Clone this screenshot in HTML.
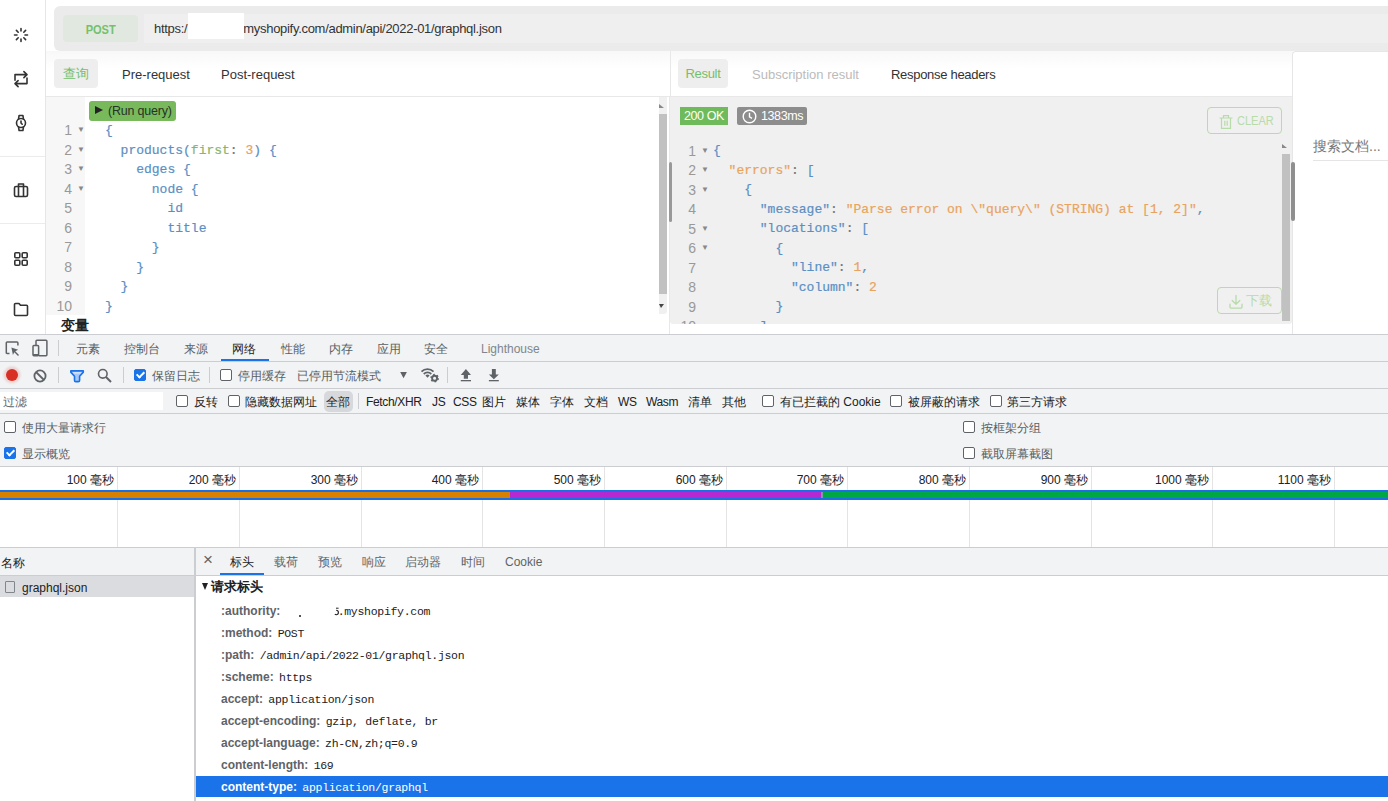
<!DOCTYPE html>
<html><head><meta charset="utf-8">
<style>
*{box-sizing:border-box;margin:0;padding:0}
html,body{width:1388px;height:801px;overflow:hidden;background:#fff;font-family:"Liberation Sans",sans-serif;position:relative}
.a{position:absolute}
.mono{font-family:"Liberation Mono",monospace}
/* sidebar */
#side{left:0;top:0;width:46px;height:334px;background:#fff;border-right:1px solid #e6e6e6}
.sep{left:0;width:45px;height:1px;background:#ececec}
/* code */
.ln{color:#999;font-size:14px;width:30px;text-align:right}
.code{font-size:13px;white-space:pre;color:#5a8ec0;-webkit-text-stroke:0.2px currentColor}
.fold{font-size:8px;color:#888}

.dt{font-size:12px;line-height:18px;color:#5a5e63;white-space:nowrap}
.cb{width:12px;height:12px;border:1.5px solid #5f6368;border-radius:2px;background:#fff}
.cb.on{background:#1a73e8;border-color:#1a73e8}
.cb.on::after{content:"";position:absolute;left:2.5px;top:0px;width:3px;height:6px;border:solid #fff;border-width:0 2px 2px 0;transform:rotate(45deg)}
.hn{font-size:12px;font-weight:bold;color:#5f6368;line-height:18px;white-space:nowrap}
.hv{font-family:"Liberation Mono",monospace;font-size:11.5px;letter-spacing:-0.3px;color:#202124;font-weight:normal;margin-left:2px}
</style></head><body>

<!-- Sidebar -->
<div id="side" class="a"></div>
<div class="a sep" style="top:156px"></div>
<div class="a sep" style="top:223px"></div>
<svg class="a" style="left:13px;top:27px" width="16" height="16" viewBox="0 0 16 16" fill="none" stroke="#333" stroke-width="1.6" stroke-linecap="round">
 <path d="M8 1.5v2.5M8 12v2.5M1.5 8h2.5M12 8h2.5M3.4 3.4l1.8 1.8M10.8 10.8l1.8 1.8M3.4 12.6l1.8-1.8M10.8 5.2l1.8-1.8"/>
</svg>
<svg class="a" style="left:13px;top:70px" width="16" height="18" viewBox="0 -1 16 18" fill="none" stroke="#333" stroke-width="1.6" stroke-linecap="round" stroke-linejoin="round">
 <path d="M2 9.2V3.6h12M10.9 0.6L14 3.6l-3.1 3M14 7V12.6H2M5.1 9.6L2 12.6l3.1 3"/>
</svg>
<svg class="a" style="left:13px;top:114px" width="16" height="18" viewBox="0 0 16 18" fill="none" stroke="#333" stroke-width="1.6" stroke-linecap="round" stroke-linejoin="round">
 <circle cx="8" cy="9" r="4.5"/><path d="M5.5 5.2l.6-3.7h3.8l.6 3.7M5.5 12.8l.6 3.7h3.8l.6-3.7M8 7v2l1.2 1.2"/>
</svg>
<svg class="a" style="left:13px;top:182px" width="16" height="16" viewBox="0 0 16 16" fill="none" stroke="#333" stroke-width="1.6" stroke-linejoin="round">
 <rect x="1.5" y="4.5" width="13" height="10" rx="1.5"/><path d="M5.5 4.5V2h5v2.5M5.5 4.5v10M10.5 4.5v10"/>
</svg>
<svg class="a" style="left:13px;top:251px" width="16" height="16" viewBox="0 0 16 16" fill="none" stroke="#333" stroke-width="1.6">
 <rect x="1.8" y="1.8" width="5" height="5" rx="1"/><rect x="9.2" y="1.8" width="5" height="5" rx="1"/><rect x="1.8" y="9.2" width="5" height="5" rx="1"/><rect x="9.2" y="9.2" width="5" height="5" rx="1"/>
</svg>
<svg class="a" style="left:13px;top:301px" width="16" height="16" viewBox="0 0 16 16" fill="none" stroke="#333" stroke-width="1.6" stroke-linejoin="round">
 <path d="M1.5 3.5a1 1 0 0 1 1-1h3.5l1.5 1.8h6a1 1 0 0 1 1 1v8.2a1 1 0 0 1-1 1h-11a1 1 0 0 1-1-1z"/>
</svg>

<!-- URL bar -->
<div class="a" style="left:46px;top:0;width:1342px;height:51px;background:#fff"></div>
<div class="a" style="left:54px;top:6px;width:1340px;height:45px;background:#ebebeb;border-radius:6px"></div>
<div class="a" style="left:63px;top:15px;width:75px;height:27px;background:#e1e8df;border-radius:4px;color:#74c06c;font-weight:bold;font-size:13px;text-align:center;line-height:30px"><span style="display:inline-block;transform:scaleX(.85)">POST</span></div>
<div class="a" style="left:144px;top:14px;width:1250px;height:29px;background:#efefef"></div>
<div class="a" style="left:154px;top:20px;font-size:13px;color:#333;line-height:18px;letter-spacing:-0.3px">https:/<span style="display:inline-block;width:56px"></span>myshopify.com/admin/api/2022-01/graphql.json</div>
<div class="a" style="left:188px;top:13px;width:56px;height:26px;background:#fff"></div>

<!-- Editor tabs -->
<div class="a" style="left:46px;top:51px;width:624px;height:46px;background:linear-gradient(#f8f8f8,#fff 40%);border-bottom:1px solid #e8e8e8"></div>
<div class="a" style="left:54px;top:59px;width:44px;height:29px;background:#eeeeee;border-radius:4px;color:#74c06c;font-size:13px;text-align:center;line-height:29px">查询</div>
<div class="a" style="left:122px;top:67px;font-size:13px;color:#333;line-height:16px">Pre-request</div>
<div class="a" style="left:221px;top:67px;font-size:13px;color:#333;line-height:16px">Post-request</div>

<!-- Query editor -->
<div class="a" style="left:46px;top:97px;width:624px;height:237px;background:#fff;border-right:1px solid #e8e8e8"></div>
<div class="a" style="left:46px;top:97px;width:39px;height:218px;background:#f7f7f7"></div>
<div class="a" style="left:89px;top:101px;width:87px;height:20px;background:#78b95c;border-radius:3px"></div><div class="a" style="left:95px;top:106px;width:0;height:0;border-top:4.5px solid transparent;border-bottom:4.5px solid transparent;border-left:8px solid #222"></div><div class="a" style="left:108px;top:102px;color:#263326;font-size:12.5px;line-height:18px;letter-spacing:-0.2px">(Run query)</div>
<div class="a ln" style="left:42px;top:121.0px;line-height:18px">1</div>
<div class="a fold" style="left:77px;top:121.0px;line-height:18px">&#9660;</div>
<div class="a code mono" style="left:105px;top:122.0px;line-height:18px"><span style="color:#5b8fc4">{</span></div>
<div class="a ln" style="left:42px;top:140.5px;line-height:18px">2</div>
<div class="a fold" style="left:77px;top:140.5px;line-height:18px">&#9660;</div>
<div class="a code mono" style="left:105px;top:141.5px;line-height:18px">  <span style="color:#5b8fc4">products(</span><span style="color:#8cb56b">first</span><span style="color:#777">:</span> <span style="color:#e9a35d">3</span><span style="color:#5b8fc4">) {</span></div>
<div class="a ln" style="left:42px;top:160.0px;line-height:18px">3</div>
<div class="a fold" style="left:77px;top:160.0px;line-height:18px">&#9660;</div>
<div class="a code mono" style="left:105px;top:161.0px;line-height:18px">    <span style="color:#5b8fc4">edges {</span></div>
<div class="a ln" style="left:42px;top:179.5px;line-height:18px">4</div>
<div class="a fold" style="left:77px;top:179.5px;line-height:18px">&#9660;</div>
<div class="a code mono" style="left:105px;top:180.5px;line-height:18px">      <span style="color:#5b8fc4">node {</span></div>
<div class="a ln" style="left:42px;top:199.0px;line-height:18px">5</div>
<div class="a code mono" style="left:105px;top:200.0px;line-height:18px">        <span style="color:#5b8fc4">id</span></div>
<div class="a ln" style="left:42px;top:218.5px;line-height:18px">6</div>
<div class="a code mono" style="left:105px;top:219.5px;line-height:18px">        <span style="color:#5b8fc4">title</span></div>
<div class="a ln" style="left:42px;top:238.0px;line-height:18px">7</div>
<div class="a code mono" style="left:105px;top:239.0px;line-height:18px">      <span style="color:#5b8fc4">}</span></div>
<div class="a ln" style="left:42px;top:257.5px;line-height:18px">8</div>
<div class="a code mono" style="left:105px;top:258.5px;line-height:18px">    <span style="color:#5b8fc4">}</span></div>
<div class="a ln" style="left:42px;top:277.0px;line-height:18px">9</div>
<div class="a code mono" style="left:105px;top:278.0px;line-height:18px">  <span style="color:#5b8fc4">}</span></div>
<div class="a ln" style="left:42px;top:296.5px;line-height:18px">10</div>
<div class="a code mono" style="left:105px;top:297.5px;line-height:18px"><span style="color:#5b8fc4">}</span></div>
<div class="a" style="left:61px;top:316px;font-size:14px;font-weight:bold;color:#222;line-height:18px">变量</div>
<!-- editor scrollbar -->
<div class="a" style="left:659px;top:97px;width:8px;height:217px;background:#f0f0f0;border-bottom-right-radius:3px"></div>
<div class="a" style="left:659px;top:114px;width:8px;height:180px;background:#c1c1c1"></div>
<div class="a" style="left:659px;top:104px;width:0;height:0;border-left:0 solid transparent;border-right:5px solid transparent;border-bottom:4px solid #888"></div>
<div class="a" style="left:659px;top:304px;width:0;height:0;border-left:2px solid transparent;border-right:3px solid transparent;border-top:4px solid #444"></div>
<div class="a" style="left:669px;top:97px;width:1px;height:237px;background:#e8e8e8"></div>

<!-- Result tabs -->
<div class="a" style="left:670px;top:51px;width:623px;height:46px;background:linear-gradient(#f8f8f8,#fff 40%);border-bottom:1px solid #e8e8e8;border-left:1px solid #e8e8e8"></div>
<div class="a" style="left:678px;top:59px;width:50px;height:29px;background:#eeeeee;border-radius:4px;color:#74c06c;font-size:13px;text-align:center;line-height:30px;letter-spacing:-0.3px">Result</div>
<div class="a" style="left:752px;top:67px;font-size:13px;color:#bbb;line-height:16px">Subscription result</div>
<div class="a" style="left:891px;top:67px;font-size:13px;color:#333;line-height:16px;letter-spacing:-0.3px">Response headers</div>

<!-- Result pane -->
<div class="a" style="left:670px;top:97px;width:622px;height:227px;background:#f0f0f0;border-bottom-left-radius:3px;border-bottom-right-radius:3px"></div>
<div class="a" style="left:680px;top:107px;width:48px;height:18px;background:#6fbb5b;color:#fff;font-size:12.5px;line-height:19px;text-align:center;letter-spacing:-0.4px">200 OK</div>
<div class="a" style="left:737px;top:107px;width:70px;height:18px;background:#8d8d8d;border-radius:2px;color:#fff;font-size:12.5px;line-height:19px;padding-left:24px;letter-spacing:-0.4px">1383ms</div>
<svg class="a" style="left:742px;top:109px" width="15" height="15" viewBox="0 0 15 15" fill="none" stroke="#fff" stroke-width="1.4"><circle cx="7.5" cy="7.5" r="6.3"/><path d="M7.5 3.8v4l2.5 1.6"/></svg>
<div class="a" style="left:670px;top:140px;width:612px;height:184px;overflow:hidden"><div class="a ln" style="left:-4px;top:1.5px;line-height:18px">1</div>
<div class="a fold" style="left:31px;top:1.5px;line-height:18px">&#9660;</div>
<div class="a code mono" style="left:43px;top:2.0px;line-height:18px"><span style="color:#5b8fc4">{</span></div>
<div class="a ln" style="left:-4px;top:21.0px;line-height:18px">2</div>
<div class="a fold" style="left:31px;top:21.0px;line-height:18px">&#9660;</div>
<div class="a code mono" style="left:43px;top:21.5px;line-height:18px">  <span style="color:#e9a35d">"errors"</span><span style="color:#777">:</span> <span style="color:#5b8fc4">[</span></div>
<div class="a ln" style="left:-4px;top:40.5px;line-height:18px">3</div>
<div class="a fold" style="left:31px;top:40.5px;line-height:18px">&#9660;</div>
<div class="a code mono" style="left:43px;top:41.0px;line-height:18px">    <span style="color:#5b8fc4">{</span></div>
<div class="a ln" style="left:-4px;top:60.0px;line-height:18px">4</div>
<div class="a code mono" style="left:43px;top:60.5px;line-height:18px">      <span style="color:#5b8fc4">"message"</span><span style="color:#777">:</span> <span style="color:#e9a35d">"Parse error on \"query\" (STRING) at [1, 2]"</span><span style="color:#5b8fc4">,</span></div>
<div class="a ln" style="left:-4px;top:79.5px;line-height:18px">5</div>
<div class="a fold" style="left:31px;top:79.5px;line-height:18px">&#9660;</div>
<div class="a code mono" style="left:43px;top:80.0px;line-height:18px">      <span style="color:#5b8fc4">"locations"</span><span style="color:#777">:</span> <span style="color:#5b8fc4">[</span></div>
<div class="a ln" style="left:-4px;top:99.0px;line-height:18px">6</div>
<div class="a fold" style="left:31px;top:99.0px;line-height:18px">&#9660;</div>
<div class="a code mono" style="left:43px;top:99.5px;line-height:18px">        <span style="color:#5b8fc4">{</span></div>
<div class="a ln" style="left:-4px;top:118.5px;line-height:18px">7</div>
<div class="a code mono" style="left:43px;top:119.0px;line-height:18px">          <span style="color:#5b8fc4">"line"</span><span style="color:#777">:</span> <span style="color:#e9a35d">1</span><span style="color:#5b8fc4">,</span></div>
<div class="a ln" style="left:-4px;top:138.0px;line-height:18px">8</div>
<div class="a code mono" style="left:43px;top:138.5px;line-height:18px">          <span style="color:#5b8fc4">"column"</span><span style="color:#777">:</span> <span style="color:#e9a35d">2</span></div>
<div class="a ln" style="left:-4px;top:157.5px;line-height:18px">9</div>
<div class="a code mono" style="left:43px;top:158.0px;line-height:18px">        <span style="color:#5b8fc4">}</span></div>
<div class="a ln" style="left:-4px;top:177.0px;line-height:18px">10</div>
<div class="a code mono" style="left:43px;top:177.5px;line-height:18px">      <span style="color:#5b8fc4">]</span></div></div>
<div class="a" style="left:1207px;top:107px;width:75px;height:27px;border:1px solid #b7dba9;border-radius:4px"></div>
<svg class="a" style="left:1218px;top:114px" width="16" height="16" viewBox="0 0 16 16" fill="none" stroke="#b7dba9" stroke-width="1.2"><path d="M1.5 4h13M5.5 4V1.6h5V4M3.5 4v10.4h9V4M6.8 6.8v5M9.2 6.8v5"/></svg>
<div class="a" style="left:1237px;top:113px;font-size:12.5px;line-height:16px;color:#b7dba9;transform:scaleX(.88);transform-origin:0 0">CLEAR</div>
<div class="a" style="left:1217px;top:287px;width:65px;height:27px;border:1px solid #b7dba9;border-radius:4px"></div>
<svg class="a" style="left:1228px;top:294px" width="16" height="16" viewBox="0 0 16 16" fill="none" stroke="#b7dba9" stroke-width="1.3" stroke-linecap="round" stroke-linejoin="round"><path d="M8 1.5v8.5M4.2 6.5L8 10.2l3.8-3.7M2 10.2v2.8a1.2 1.2 0 0 0 1.2 1.2h9.6a1.2 1.2 0 0 0 1.2-1.2v-2.8"/></svg>
<div class="a" style="left:1246px;top:292px;font-size:13px;line-height:18px;color:#b7dba9">下载</div>
<div class="a" style="left:1282px;top:154px;width:8px;height:167px;background:#c1c1c1"></div>
<div class="a" style="left:1282px;top:144px;width:0;height:0;border-right:5px solid transparent;border-bottom:4px solid #888"></div>

<div class="a" style="left:669px;top:162px;width:3px;height:60px;background:#999;border-radius:2px"></div>
<!-- Docs panel -->
<div class="a" style="left:1292px;top:51px;width:96px;height:283px;background:#fff;border-left:1px solid #e6e6e6;border-top:1px solid #e6e6e6;border-top-left-radius:4px"></div>
<div class="a" style="left:1313px;top:137px;font-size:14px;color:#777;line-height:18px">搜索文档...</div>
<div class="a" style="left:1313px;top:160px;width:75px;height:1px;background:#e5e5e5"></div>
<div class="a" style="left:1291px;top:162px;width:4px;height:59px;background:#8f8f8f;border-radius:2px"></div>

<!-- ============ DEVTOOLS ============ -->
<div id="dev" class="a" style="left:0;top:334px;width:1388px;height:467px;background:#f1f3f4;border-top:1px solid #cbcdd1"></div>


<div class="a" style="left:0;top:361px;width:1388px;height:1px;background:#cbcdd1"></div>
<div class="a" style="left:0;top:388px;width:1388px;height:1px;background:#cbcdd1"></div>
<div class="a" style="left:0;top:413px;width:1388px;height:1px;background:#cbcdd1"></div>
<div class="a" style="left:0;top:466px;width:1388px;height:1px;background:#cbcdd1"></div>
<!-- tab bar icons -->
<svg class="a" style="left:0;top:336px" width="56" height="26" viewBox="0 0 56 26" fill="none" stroke="#5f6368" stroke-width="1.5">
 <path d="M9.5 17.6H7.2a0.9 0.9 0 0 1-0.9-0.9V7a0.9 0.9 0 0 1 0.9-0.9h9.8a0.9 0.9 0 0 1 0.9 0.9v2.6"/>
 <path d="M11.4 11.4L18.2 13.8 15.3 15.2 19 18.9 18 19.9 14.3 16.2 12.9 19z" fill="#5f6368" stroke="none"/>
 <path d="M36 9.2V5.2a0.9 0.9 0 0 1 0.9-0.9h9.1a0.9 0.9 0 0 1 0.9 0.9v13.6a0.9 0.9 0 0 1-0.9 0.9h-7.2"/>
 <rect x="33" y="9.6" width="5.6" height="10.1" rx="0.9"/>
 <path d="M33 18.8h5.6" stroke-width="1.6"/>
</svg>
<div class="a" style="left:58px;top:340px;width:1px;height:16px;background:#cbcdd1"></div>
<div class="dt a" style="left:76px;top:340px">元素</div>
<div class="dt a" style="left:124px;top:340px">控制台</div>
<div class="dt a" style="left:184px;top:340px">来源</div>
<div class="dt a" style="left:232px;top:340px;color:#202124">网络</div>
<div class="a" style="left:221px;top:359px;width:48px;height:2px;background:#1a73e8"></div>
<div class="dt a" style="left:281px;top:340px">性能</div>
<div class="dt a" style="left:329px;top:340px">内存</div>
<div class="dt a" style="left:377px;top:340px">应用</div>
<div class="dt a" style="left:424px;top:340px">安全</div>
<div class="dt a" style="left:481px;top:340px;color:#80868b">Lighthouse</div>

<!-- toolbar -->
<div class="a" style="left:6px;top:369px;width:12px;height:12px;border-radius:50%;background:#d93025;box-shadow:0 0 2px 2.5px rgba(217,48,37,.16)"></div>
<svg class="a" style="left:33px;top:368.5px" width="14" height="14" viewBox="0 0 14 14" fill="none" stroke="#5f6368" stroke-width="1.8"><circle cx="7" cy="7" r="5.6"/><path d="M3 3l8 8"/></svg>
<div class="a" style="left:58px;top:367px;width:1px;height:16px;background:#cbcdd1"></div>
<svg class="a" style="left:64px;top:364px" width="26" height="22" viewBox="0 0 26 22"><path d="M6.8 6.9H19.3V8.1L15.6 12.3V16.2A1.4 1.4 0 0 1 14.2 17.6H11.9A1.4 1.4 0 0 1 10.5 16.2V12.3L6.8 8.1Z" fill="#a8c7fa" stroke="#1a73e8" stroke-width="1.6" stroke-linejoin="round"/><path d="M8.6 8.3H17.5L16.4 9.6H9.7Z" fill="#f1f3f4" opacity=".8"/></svg>
<svg class="a" style="left:97px;top:368px" width="15" height="15" viewBox="0 0 15 15" fill="none" stroke="#5f6368" stroke-width="1.6"><circle cx="5.8" cy="5.8" r="4.3"/><path d="M9 9l5 5" stroke-width="2"/></svg>
<div class="a" style="left:123px;top:367px;width:1px;height:16px;background:#cbcdd1"></div>
<div class="cb on a" style="left:134px;top:369px"></div>
<div class="dt a" style="left:152px;top:367px">保留日志</div>
<div class="a" style="left:209px;top:367px;width:1px;height:16px;background:#cbcdd1"></div>
<div class="cb a" style="left:220px;top:369px"></div>
<div class="dt a" style="left:238px;top:367px">停用缓存</div>
<div class="dt a" style="left:297px;top:367px">已停用节流模式</div>
<svg class="a" style="left:395px;top:362px" width="112" height="26" viewBox="0 0 112 26">
 <path d="M5.2 9.9H11.9L8.55 16.2z" fill="#5f6368"/>
 <g fill="none" stroke="#5f6368" stroke-width="1.8"><path d="M26.5 9.6A8.5 8.5 0 0 1 38.5 9.6"/><path d="M28.8 12A5.3 5.3 0 0 1 36.3 12"/></g>
 <path d="M30.4 13.6L32.5 15.7 34.6 13.6A3 3 0 0 0 30.4 13.6z" fill="#5f6368"/>
 <circle cx="39.6" cy="16.2" r="2.5" fill="none" stroke="#5f6368" stroke-width="1.9"/>
 <circle cx="39.6" cy="16.2" r="3.6" fill="none" stroke="#5f6368" stroke-width="1.5" stroke-dasharray="1.7 2.07"/>
 <rect x="52" y="5" width="1" height="16" fill="#cbcdd1"/>
 <path d="M65.8 13L70.9 7.1 76 13H73V16.8H68.8V13z" fill="#5f6368"/><rect x="65.8" y="18" width="10.2" height="1.3" fill="#5f6368"/>
 <path d="M96.9 7.1H100.8V12.6H103.8L98.85 17.2 93.9 12.6H96.9z" fill="#5f6368"/><rect x="93.9" y="18" width="9.9" height="1.3" fill="#5f6368"/>
</svg>

<!-- filter row -->
<div class="a" style="left:0;top:392px;width:163px;height:18px;background:#fff"></div>
<div class="dt a" style="left:3px;top:393px;color:#5f6368">过滤</div>
<div class="cb a" style="left:176px;top:395px"></div>
<div class="dt a" style="left:194px;top:393px;color:#202124">反转</div>
<div class="cb a" style="left:228px;top:395px"></div>
<div class="dt a" style="left:245px;top:393px;color:#202124">隐藏数据网址</div>
<div class="a" style="left:324px;top:391px;width:29px;height:21px;background:#d6d8db;border-radius:5px"></div>
<div class="dt a" style="left:326px;top:393px;color:#202124">全部</div>
<div class="a" style="left:358px;top:393px;width:1px;height:16px;background:#cbcdd1"></div>
<div class="dt a" style="left:366px;top:393px;color:#202124;letter-spacing:-0.35px">Fetch/XHR</div>
<div class="dt a" style="left:432px;top:393px;color:#202124;letter-spacing:-0.35px">JS</div>
<div class="dt a" style="left:453px;top:393px;color:#202124;letter-spacing:-0.35px">CSS</div>
<div class="dt a" style="left:482px;top:393px;color:#202124">图片</div>
<div class="dt a" style="left:516px;top:393px;color:#202124">媒体</div>
<div class="dt a" style="left:550px;top:393px;color:#202124">字体</div>
<div class="dt a" style="left:584px;top:393px;color:#202124">文档</div>
<div class="dt a" style="left:618px;top:393px;color:#202124;letter-spacing:-0.35px">WS</div>
<div class="dt a" style="left:646px;top:393px;color:#202124;letter-spacing:-0.35px">Wasm</div>
<div class="dt a" style="left:688px;top:393px;color:#202124">清单</div>
<div class="dt a" style="left:722px;top:393px;color:#202124">其他</div>
<div class="cb a" style="left:762px;top:395px"></div>
<div class="dt a" style="left:780px;top:393px;color:#202124">有已拦截的 Cookie</div>
<div class="cb a" style="left:890px;top:395px"></div>
<div class="dt a" style="left:908px;top:393px;color:#202124">被屏蔽的请求</div>
<div class="cb a" style="left:990px;top:395px"></div>
<div class="dt a" style="left:1007px;top:393px;color:#202124">第三方请求</div>

<!-- options -->
<div class="cb a" style="left:4px;top:421px"></div>
<div class="dt a" style="left:22px;top:419px">使用大量请求行</div>
<div class="cb on a" style="left:4px;top:447px"></div>
<div class="dt a" style="left:22px;top:445px">显示概览</div>
<div class="cb a" style="left:963px;top:421px"></div>
<div class="dt a" style="left:981px;top:419px">按框架分组</div>
<div class="cb a" style="left:963px;top:447px"></div>
<div class="dt a" style="left:981px;top:445px">截取屏幕截图</div>

<!-- overview -->
<div class="a" style="left:0;top:467px;width:1388px;height:80px;background:#fff"></div>
<div class="a" style="left:117px;top:467px;width:1px;height:80px;background:#e4e4e4"></div>
<div class="dt a" style="left:-3px;top:471px;width:117px;text-align:right;color:#202124">100 毫秒</div>
<div class="a" style="left:239px;top:467px;width:1px;height:80px;background:#e4e4e4"></div>
<div class="dt a" style="left:119px;top:471px;width:117px;text-align:right;color:#202124">200 毫秒</div>
<div class="a" style="left:361px;top:467px;width:1px;height:80px;background:#e4e4e4"></div>
<div class="dt a" style="left:241px;top:471px;width:117px;text-align:right;color:#202124">300 毫秒</div>
<div class="a" style="left:482px;top:467px;width:1px;height:80px;background:#e4e4e4"></div>
<div class="dt a" style="left:362px;top:471px;width:117px;text-align:right;color:#202124">400 毫秒</div>
<div class="a" style="left:604px;top:467px;width:1px;height:80px;background:#e4e4e4"></div>
<div class="dt a" style="left:484px;top:471px;width:117px;text-align:right;color:#202124">500 毫秒</div>
<div class="a" style="left:726px;top:467px;width:1px;height:80px;background:#e4e4e4"></div>
<div class="dt a" style="left:606px;top:471px;width:117px;text-align:right;color:#202124">600 毫秒</div>
<div class="a" style="left:847px;top:467px;width:1px;height:80px;background:#e4e4e4"></div>
<div class="dt a" style="left:727px;top:471px;width:117px;text-align:right;color:#202124">700 毫秒</div>
<div class="a" style="left:969px;top:467px;width:1px;height:80px;background:#e4e4e4"></div>
<div class="dt a" style="left:849px;top:471px;width:117px;text-align:right;color:#202124">800 毫秒</div>
<div class="a" style="left:1091px;top:467px;width:1px;height:80px;background:#e4e4e4"></div>
<div class="dt a" style="left:971px;top:471px;width:117px;text-align:right;color:#202124">900 毫秒</div>
<div class="a" style="left:1212px;top:467px;width:1px;height:80px;background:#e4e4e4"></div>
<div class="dt a" style="left:1092px;top:471px;width:117px;text-align:right;color:#202124">1000 毫秒</div>
<div class="a" style="left:1334px;top:467px;width:1px;height:80px;background:#e4e4e4"></div>
<div class="dt a" style="left:1214px;top:471px;width:117px;text-align:right;color:#202124">1100 毫秒</div>
<div class="a" style="left:0;top:490px;width:1388px;height:10px;background:#1a6fe6"></div>
<div class="a" style="left:0;top:492px;width:510px;height:6px;background:#d98000"></div>
<div class="a" style="left:510px;top:492px;width:311px;height:6px;background:#b52ad0"></div>
<div class="a" style="left:821px;top:492px;width:2px;height:6px;background:#7a9aa0"></div>
<div class="a" style="left:823px;top:492px;width:565px;height:6px;background:#00a844"></div>
<div class="a" style="left:0;top:547px;width:1388px;height:1px;background:#cbcdd1"></div>

<!-- table -->
<div class="a" style="left:0;top:548px;width:194px;height:28px;background:#f1f3f4;border-bottom:1px solid #cbcdd1"></div>
<div class="dt a" style="left:1px;top:554px;color:#202124">名称</div>
<div class="a" style="left:0;top:576px;width:194px;height:21px;background:#dadce0"></div>
<div class="cb a" style="left:5px;top:581px;width:10px;height:12px;border-color:#80868b;border-width:1px;background:transparent;border-radius:1px"></div>
<div class="dt a" style="left:22px;top:579px;color:#202124">graphql.json</div>
<div class="a" style="left:0;top:597px;width:194px;height:204px;background:#fff"></div>
<div class="a" style="left:194px;top:548px;width:2px;height:253px;background:#cbcdd1"></div>
<div class="a" style="left:196px;top:548px;width:1192px;height:28px;background:#f1f3f4;border-bottom:1px solid #cbcdd1"></div>
<div class="dt a" style="left:203px;top:551px;color:#5f6368;font-size:17px">&#215;</div>
<div class="dt a" style="left:230px;top:553px;color:#202124">标头</div>
<div class="a" style="left:220px;top:573px;width:44px;height:2px;background:#1a73e8"></div>
<div class="dt a" style="left:274px;top:553px;color:#5f6368">载荷</div>
<div class="dt a" style="left:318px;top:553px;color:#5f6368">预览</div>
<div class="dt a" style="left:362px;top:553px;color:#5f6368">响应</div>
<div class="dt a" style="left:405px;top:553px;color:#5f6368">启动器</div>
<div class="dt a" style="left:461px;top:553px;color:#5f6368">时间</div>
<div class="dt a" style="left:505px;top:553px;color:#5f6368">Cookie</div>
<div class="a" style="left:196px;top:576px;width:1192px;height:225px;background:#fff"></div>
<div class="a" style="left:202px;top:583px;width:0;height:0;border-left:3.5px solid transparent;border-right:3.5px solid transparent;border-top:7px solid #202124"></div>
<div class="dt a" style="left:211px;top:578px;color:#202124;font-weight:bold;font-size:13px">请求标头</div>
<div class="hn a" style="left:221px;top:602px">:authority: <span class="hv"><span style="display:inline-block;width:52px"></span>.myshopify.com</span></div>
<div class="hn a" style="left:221px;top:624px">:method: <span class="hv">POST</span></div>
<div class="hn a" style="left:221px;top:646px">:path: <span class="hv">/admin/api/2022-01/graphql.json</span></div>
<div class="hn a" style="left:221px;top:668px">:scheme: <span class="hv">https</span></div>
<div class="hn a" style="left:221px;top:690px">accept: <span class="hv">application/json</span></div>
<div class="hn a" style="left:221px;top:712px">accept-encoding: <span class="hv">gzip, deflate, br</span></div>
<div class="hn a" style="left:221px;top:734px">accept-language: <span class="hv">zh-CN,zh;q=0.9</span></div>
<div class="hn a" style="left:221px;top:756px">content-length: <span class="hv">169</span></div>
<div class="a" style="left:196px;top:776px;width:1192px;height:21px;background:#1a73e8"></div>
<div class="hn a" style="left:221px;top:778px;color:#fff">content-type: <span class="hv" style="color:#fff;font-weight:normal">application/graphql</span></div>

<svg class="a" style="left:333px;top:606px" width="8" height="12" viewBox="0 0 8 12"><path d="M3.2 4.3a2.2 2.2 0 1 1 0 4.4 2.6 2.6 0 0 1-1.4-.4" fill="none" stroke="#202124" stroke-width="1.1"/><path d="M3 2.2h2.6" stroke="#202124" stroke-width="1"/></svg>
<div class="a" style="left:299px;top:615px;width:2px;height:2px;background:#555"></div>
</body></html>
